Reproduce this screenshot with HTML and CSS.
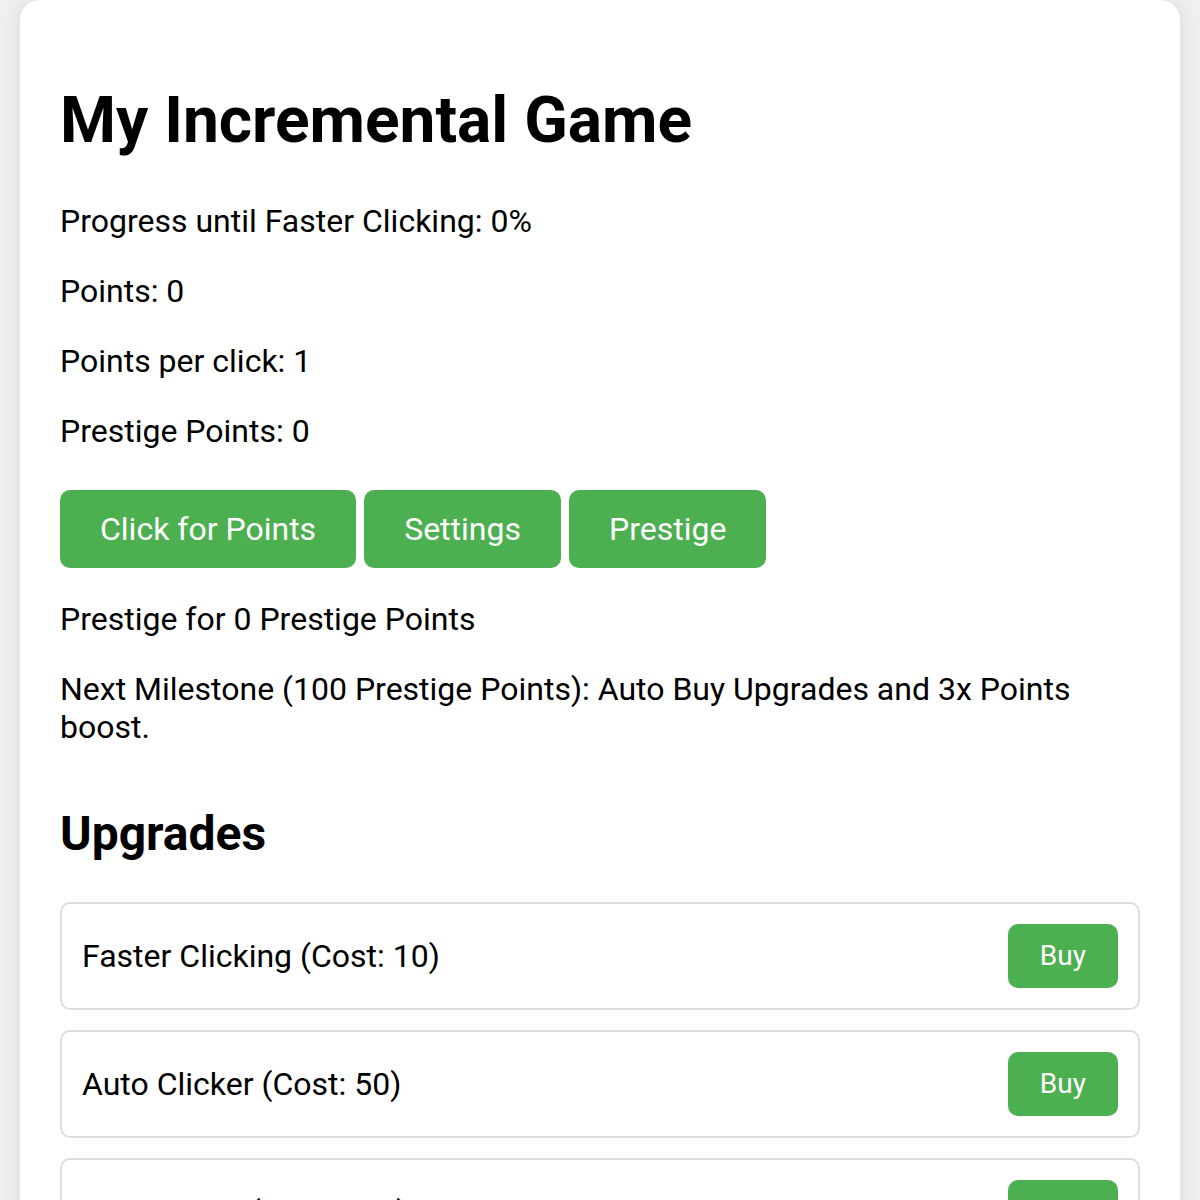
FILE: index.html
```html
<!DOCTYPE html>
<html>
<head>
<meta charset="utf-8">
<link rel="stylesheet" href="styles.css">
</head>
<body>
<div class="container">
  <h1 class="title">My Incremental Game</h1>
  <p class="stat">Progress until Faster Clicking: 0%</p>
  <p class="stat">Points: 0</p>
  <p class="stat">Points per click: 1</p>
  <p class="stat">Prestige Points: 0</p>
  <div class="actions">
    <button class="btn">Click for Points</button>
    <button class="btn">Settings</button>
    <button class="btn">Prestige</button>
  </div>
  <p class="stat">Prestige for 0 Prestige Points</p>
  <p class="stat">Next Milestone (100 Prestige Points): Auto Buy Upgrades and 3x Points boost.</p>
  <div class="upgrades">
    <h2 class="section-title">Upgrades</h2>
    <div class="upgrade">
      <span class="upgrade-name">Faster Clicking (Cost: 10)</span>
      <button class="buy">Buy</button>
    </div>
    <div class="upgrade">
      <span class="upgrade-name">Auto Clicker (Cost: 50)</span>
      <button class="buy">Buy</button>
    </div>
    <div class="upgrade">
      <span class="upgrade-name">Super Click (Cost: 100)</span>
      <button class="buy">Buy</button>
    </div>
  </div>
</div>
</body>
</html>
```
FILE: styles.css
```css
html, body {
  margin: 0;
  padding: 0;
}
body {
  background: #f0f0f0;
  font-family: Roboto, "Liberation Sans", Arial, sans-serif;
  font-size: 32px;
  color: #000;
}
.container {
  margin: 0 20px;
  background: #fff;
  border-radius: 20px;
  box-shadow: 0 0 20px rgba(0, 0, 0, 0.1);
  padding: 40px;
  min-height: 1400px;
}
.title {
  font-size: 64px;
  font-weight: 700;
  margin: 43px 0 44px;
}
.stat {
  margin: 32px 0;
}
.actions {
  display: flex;
  gap: 8px;
  margin-top: 40px;
}
.btn {
  font-family: inherit;
  font-size: 32px;
  color: #fff;
  background: #4caf50;
  border: none;
  border-radius: 10px;
  padding: 20px 40px;
  line-height: 38px;
}
.upgrades {
  margin-top: 59px;
}
.section-title {
  font-size: 48px;
  font-weight: 700;
  margin: 0 0 40px;
}
.upgrade {
  display: flex;
  align-items: center;
  justify-content: space-between;
  border: 2px solid #ddd;
  border-radius: 10px;
  padding: 20px;
  margin-bottom: 20px;
}
.buy {
  font-family: inherit;
  font-size: 28px;
  line-height: 32px;
  color: #fff;
  background: #4caf50;
  border: none;
  border-radius: 10px;
  padding: 16px 32px;
}
```
